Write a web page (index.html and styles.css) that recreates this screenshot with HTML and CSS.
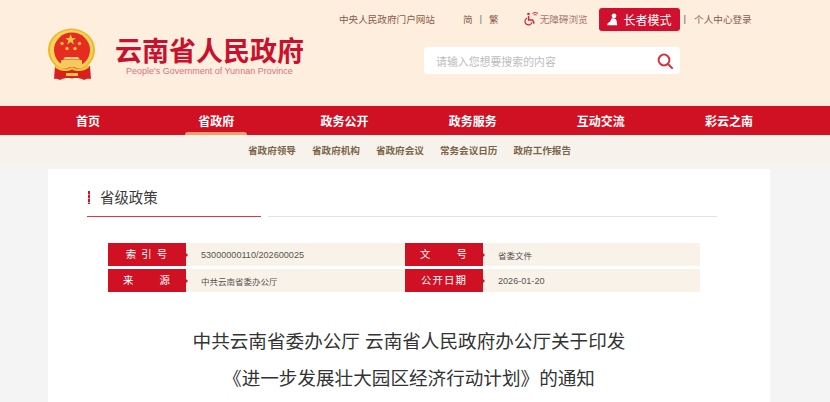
FILE: index.html
```html
<!DOCTYPE html>
<html lang="zh-CN">
<head>
<meta charset="UTF-8" />
<title>省级政策</title>
<link rel="stylesheet" href="styles.css">
</head>
<body>
<header class="header">
  <svg class="emblem" width="50" height="54" viewBox="0 0 50 54">
    <ellipse cx="24.500" cy="22" rx="23.500" ry="21.500" fill="#efb62a"/>
    <ellipse cx="24.500" cy="22" rx="21.500" ry="20" fill="#f8d35c"/>
    <ellipse cx="25" cy="22" rx="18" ry="17.500" fill="#e62b20"/>
    <polygon points="23.600,6 25,10 29,10 25.800,12.400 27,16.400 23.600,14 20.200,16.400 21.400,12.400 18.200,10 22.200,10" fill="#f6c63c"/>
    <circle cx="15" cy="15.500" r="1.700" fill="#f3c23b"/>
    <circle cx="32.500" cy="15.500" r="1.700" fill="#f3c23b"/>
    <circle cx="20" cy="20.500" r="1.700" fill="#f3c23b"/>
    <circle cx="28" cy="20.500" r="1.700" fill="#f3c23b"/>
    <path d="M18 29h13l2 2.500H16z" fill="#f7d27a"/>
    <path d="M14 32h21v7H14z" fill="#f5c95c"/>
    <path d="M8 38c5 3 11 3 17 1 6 2 12 2 18-1l1 13c-3-.5-5 0-7 1-4-2-8-2.500-12-1.500-4-1-8-.5-12 1.500-2-1-4-1.500-6-1z" fill="#d8201f"/>
    <path d="M9 37c5 4 11 4.500 16 2 5 2.500 11 2 16-2l1 2.500c-5 4-12 4.500-17 2-5 2.500-12 2-17-2z" fill="#f4c141"/>
    <path d="M19 45h12v3H19z" fill="#f4c141"/>
  </svg>
  <div class="brand">
    <div class="brand-name">云南省人民政府</div>
    <div class="brand-en">People&#39;s Government of Yunnan Province</div>
  </div>
  <div class="tools">
    <div class="toplinks">
      <span class="tl-gov">中央人民政府门户网站</span>
      <span class="tl-lang">简</span>
      <span class="tl-bar">|</span>
      <span>繁</span>
      <span class="tl-access">
        <svg width="15" height="15" viewBox="0 0 15 15" fill="none" stroke="#d0283a">
          <circle cx="4.500" cy="3" r="1.300" fill="#d0283a" stroke="none"/>
          <path d="M4.600 5v4h4l1.600 3.600" stroke-width="1.500"/>
          <path d="M3.200 7a3.600 3.600 0 1 0 4.800 4.400" stroke-width="1.200"/>
          <path d="M8.400 2.400a5 5 0 0 1 5.600 0M9.800 4a2.800 2.800 0 0 1 2.800 0" stroke-width="1"/>
        </svg>
        无障碍浏览
      </span>
      <span class="elder">
        <svg width="13" height="13" viewBox="0 0 13 13" fill="#fff">
          <circle cx="8" cy="2.800" r="2.400"/>
          <path d="M5.600 5.600c2-.7 4.600 0 5 2.200l.6 4.400H1.200c0-2 1.400-2.800 2.800-3.400z"/>
        </svg>
        长者模式
      </span>
      <span class="tl-bar2">|</span>
      <span>个人中心登录</span>
    </div>
    <div class="search">
      <span>请输入您想要搜索的内容</span>
      <svg width="16" height="16" viewBox="0 0 16 16" fill="none" stroke="#d5343c" stroke-width="2">
        <circle cx="7" cy="7" r="5.400"/>
        <path d="M11 11l4 4" stroke-linecap="round"/>
      </svg>
    </div>
  </div>
</header>

<nav class="nav">
  <a>首页</a>
  <a class="on">省政府</a>
  <a>政务公开</a>
  <a>政务服务</a>
  <a>互动交流</a>
  <a>彩云之南</a>
</nav>
<div class="subnav">
  <a>省政府领导</a>
  <a>省政府机构</a>
  <a>省政府会议</a>
  <a>常务会议日历</a>
  <a>政府工作报告</a>
</div>

<main class="card">
  <div class="crumb"><span>省级政策</span></div>
  <div class="meta">
    <div class="row"><b class="lbl">索 引 号</b><span class="val">53000000110/202600025</span></div>
    <div class="row"><b class="lbl wide">文 号</b><span class="val cn">省委文件</span></div>
    <div class="row"><b class="lbl wide">来 源</b><span class="val cn">中共云南省委办公厅</span></div>
    <div class="row"><b class="lbl">公开日期</b><span class="val">2026-01-20</span></div>
  </div>
  <h1 class="title">中共云南省委办公厅 云南省人民政府办公厅关于印发<br>《进一步发展壮大园区经济行动计划》的通知</h1>
</main>
</body>
</html>
```

FILE: styles.css
```css
html, body {
  margin: 0;
  padding: 0;
  height: 402px;
  overflow: hidden;
}

body {
  background: #f4f4f4;
  font-family: "Liberation Sans", "Noto Sans CJK SC", sans-serif;
  color: #333;
}

.header {
  height: 106px;
  background: #feeedd;
  display: flex;
  padding-left: 47px;
}

.emblem {
  margin-top: 28px;
  flex: none;
}

.brand {
  margin-left: 18px;
  margin-top: 37px;
  width: 224px;
}

.brand-name {
  font-size: 27px;
  line-height: 30px;
  font-weight: 700;
  color: #c9112f;
  white-space: nowrap;
}

.brand-en {
  font-size: 9px;
  line-height: 11px;
  margin-top: -1px;
  margin-left: 11px;
  color: #e0707c;
  white-space: nowrap;
}

.tools {
  flex: none;
}

.toplinks {
  display: flex;
  align-items: center;
  height: 21px;
  margin-top: 8px;
  font-size: 9.6px;
  color: #8a5a4c;
  white-space: nowrap;
}

.tl-lang {
  margin-left: 28px;
}

.tl-bar {
  margin: 0 7px;
  color: #5f7f80;
}

.tl-access {
  display: flex;
  align-items: center;
  gap: 1px;
  margin-left: 25px;
  color: #a07a70;
}

.elder {
  display: flex;
  align-items: center;
  gap: 5px;
  height: 23px;
  margin: 2px 0 0 11px;
  padding: 0 8px 0 7px;
  background: #d0102e;
  border-radius: 3px;
  font-size: 12px;
  color: #fff;
}

.tl-bar2 {
  margin: 0 8px 0 4px;
  color: #6b5a50;
}

.search {
  display: flex;
  align-items: center;
  justify-content: space-between;
  width: 256px;
  height: 27px;
  margin: 18px 0 0 85px;
  padding: 0 7px 0 12px;
  box-sizing: border-box;
  background: #fff;
  border-radius: 4px;
  font-size: 10.9px;
  color: #bdbdbd;
}

.nav {
  height: 29px;
  background: #d01123;
  display: grid;
  grid-template-columns: repeat(6, 128.2px);
  grid-template-rows: 29px;
  padding-left: 24px;
}

.nav a {
  position: relative;
  font-size: 12px;
  font-weight: 700;
  line-height: 32px;
  text-align: center;
  color: #fff;
}

.nav a.on::after {
  content: "";
  position: absolute;
  left: 50%;
  bottom: 0;
  width: 62px;
  height: 3px;
  margin-left: -31px;
  background: #f2a06b;
  border-radius: 3px 3px 0 0;
}

.subnav {
  height: 31px;
  background: #f7f3ec;
  display: flex;
  justify-content: center;
  gap: 16px;
  padding-right: 11px;
}

.subnav a {
  font-size: 9.6px;
  font-weight: 700;
  line-height: 32px;
  color: #7a6549;
}

.card {
  width: 722px;
  height: 233px;
  margin: 3px 0 0 48px;
  background: #fff;
}

.crumb {
  width: 630px;
  height: 48px;
  margin-left: 39px;
  box-sizing: border-box;
  border-bottom: 1px solid #e2e2e2;
  position: relative;
}

.crumb::after {
  content: "";
  position: absolute;
  left: 0;
  bottom: -1px;
  width: 174px;
  height: 1px;
  background: #d43a4c;
  border-right: 7px solid #fff;
}

.crumb span {
  display: block;
  font-size: 14.4px;
  line-height: 17px;
  padding: 21px 0 0 13px;
  position: relative;
  color: #3a3a3a;
}

.crumb span::before {
  content: "";
  position: absolute;
  left: 1px;
  top: 22px;
  width: 2px;
  height: 13px;
  background: repeating-linear-gradient(#d0112a 0 3px, #eb8f9b 3px 4px);
}

.meta {
  display: grid;
  grid-template-columns: 297px 295px;
  row-gap: 3px;
  margin: 26px 0 0 60px;
}

.row {
  display: flex;
  align-items: center;
  height: 23px;
  background: #f9f2e8;
  font-size: 9.1px;
  color: #555;
}

.lbl {
  position: relative;
  width: 78px;
  height: 23px;
  line-height: 23px;
  background: #d01123;
  text-align: center;
  font-size: 10.4px;
  font-weight: 400;
  letter-spacing: 1.100px;
  color: #fff;
  white-space: pre;
}

.lbl.wide {
  word-spacing: 21px;
}

.lbl::after {
  content: "";
  position: absolute;
  left: 78px;
  top: 10px;
  border: 2px solid transparent;
  border-left-color: #d01123;
}

.val {
  margin-left: 15px;
}

.val.cn {
  font-size: 8.5px;
}

.title {
  margin: 31px 0 0;
  font-size: 18.6px;
  line-height: 37px;
  font-weight: 400;
  text-align: center;
  color: #333;
}
```
